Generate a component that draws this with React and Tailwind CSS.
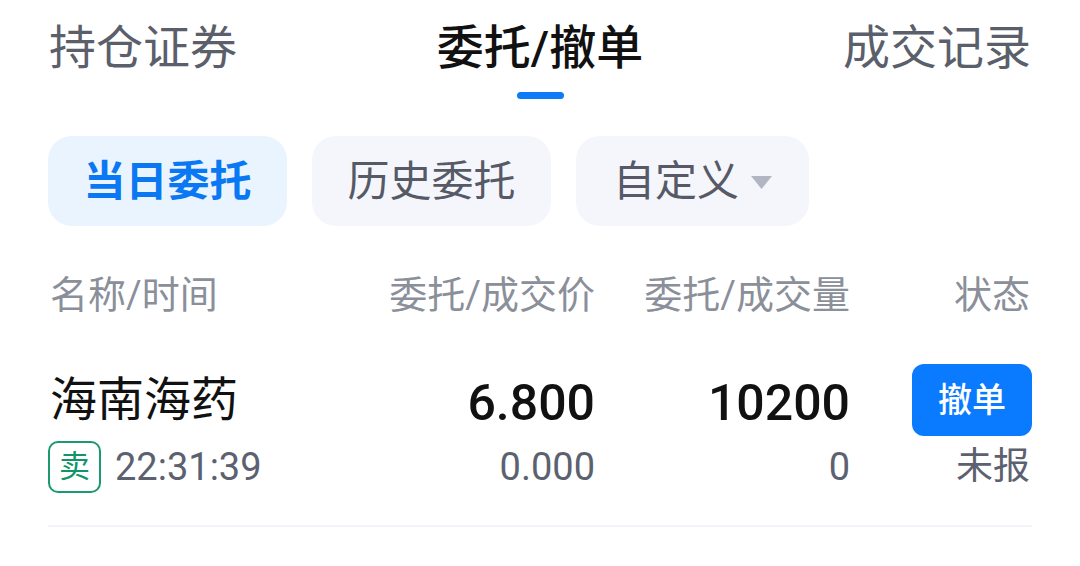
import { useState } from "react";

const tabs = ["持仓证券", "委托/撤单", "成交记录"];

const order = {
  name: "海南海药",
  side: "卖",
  time: "22:31:39",
  price: "6.800",
  dealPrice: "0.000",
  qty: "10200",
  dealQty: "0",
  status: "未报",
};

export default function App() {
  const [active, setActive] = useState(1);
  const [chip, setChip] = useState(0);

  return (
    <div className="w-[1080px] h-[566px] bg-white overflow-hidden font-['Roboto','Noto_Sans_CJK_SC',sans-serif]">
      {/* Top tabs */}
      <div className="flex justify-between items-start px-[49px] h-[100px]">
        {tabs.map((t, i) => (
          <button
            key={t}
            onClick={() => setActive(i)}
            className="flex flex-col items-center"
          >
            <span
              className={`mt-[24px] text-[47px] leading-[47px] whitespace-nowrap ${
                i === active ? "text-[#111111] font-medium" : "text-[#5b5f6b]"
              }`}
            >
              {t}
            </span>
            {i === active && (
              <span className="mt-[21px] h-[7px] w-[47px] rounded-full bg-[#0b7bf7]" />
            )}
          </button>
        ))}
      </div>

      {/* Filter chips */}
      <div className="flex gap-[25px] px-[48px] mt-[36px]">
        <button
          onClick={() => setChip(0)}
          className={`w-[239px] h-[90px] rounded-[24px] flex items-center justify-center text-[42px] ${
            chip === 0
              ? "bg-[#e9f4ff] text-[#0a78f2] font-bold"
              : "bg-[#f5f6fc] text-[#555a66]"
          }`}
        >
          当日委托
        </button>
        <button
          onClick={() => setChip(1)}
          className={`w-[239px] h-[90px] rounded-[24px] flex items-center justify-center text-[42px] ${
            chip === 1
              ? "bg-[#e9f4ff] text-[#0a78f2] font-bold"
              : "bg-[#f5f6fc] text-[#555a66]"
          }`}
        >
          历史委托
        </button>
        <button
          onClick={() => setChip(2)}
          className={`w-[233px] h-[90px] rounded-[24px] flex items-center justify-center gap-[12px] text-[42px] ${
            chip === 2
              ? "bg-[#e9f4ff] text-[#0a78f2] font-bold"
              : "bg-[#f5f6fc] text-[#555a66]"
          }`}
        >
          <span>自定义</span>
          <svg width="21" height="13" viewBox="0 0 21 13" className="mt-[2px]">
            <polygon points="0,0 21,0 10.5,13" fill="#b2b6c2" />
          </svg>
        </button>
      </div>

      {/* Column header */}
      <div className="grid grid-cols-[320px_225px_255px_180px] mx-[50px] mt-[50px] h-[38px] text-[38px] leading-[38px] text-[#8a8f9a] whitespace-nowrap">
        <div>名称/时间</div>
        <div className="text-right">委托/成交价</div>
        <div className="text-right">委托/成交量</div>
        <div className="text-right">状态</div>
      </div>

      {/* Order row */}
      <div className="grid grid-cols-[320px_225px_255px_182px] ml-[50px] mr-[48px] mt-[50px] whitespace-nowrap">
        <div className="flex flex-col">
          <div className="h-[72px] flex items-center text-[47px] text-[#111111]">
            {order.name}
          </div>
          <div className="mt-[4px] h-[54px] flex items-center gap-[14px] -ml-[2px]">
            <span className="w-[53px] h-[52px] rounded-[10px] border-2 border-[#1a9a6e] flex items-center justify-center text-[31px] text-[#12946a]">
              {order.side}
            </span>
            <span className="text-[38px] text-[#5c6170]">{order.time}</span>
          </div>
        </div>
        <div className="flex flex-col items-end">
          <div className="h-[72px] flex items-center text-[50px] font-medium text-[#111111] pt-[6px]">
            {order.price}
          </div>
          <div className="mt-[4px] h-[54px] flex items-center text-[38px] text-[#5c6170]">
            {order.dealPrice}
          </div>
        </div>
        <div className="flex flex-col items-end">
          <div className="h-[72px] flex items-center text-[50px] font-medium text-[#111111] pt-[6px]">
            {order.qty}
          </div>
          <div className="mt-[4px] h-[54px] flex items-center text-[38px] text-[#5c6170]">
            {order.dealQty}
          </div>
        </div>
        <div className="flex flex-col items-end">
          <button className="w-[120px] h-[72px] rounded-[12px] bg-[#0a7bff] text-white text-[34px] font-medium flex items-center justify-center">
            撤单
          </button>
          <div className="mt-[4px] h-[54px] flex items-center text-[37px] text-[#5c6170] mr-[2px]">
            {order.status}
          </div>
        </div>
      </div>

      <div className="mx-[48px] mt-[31px] h-[2px] bg-[#f3f4f9]" />
    </div>
  );
}
